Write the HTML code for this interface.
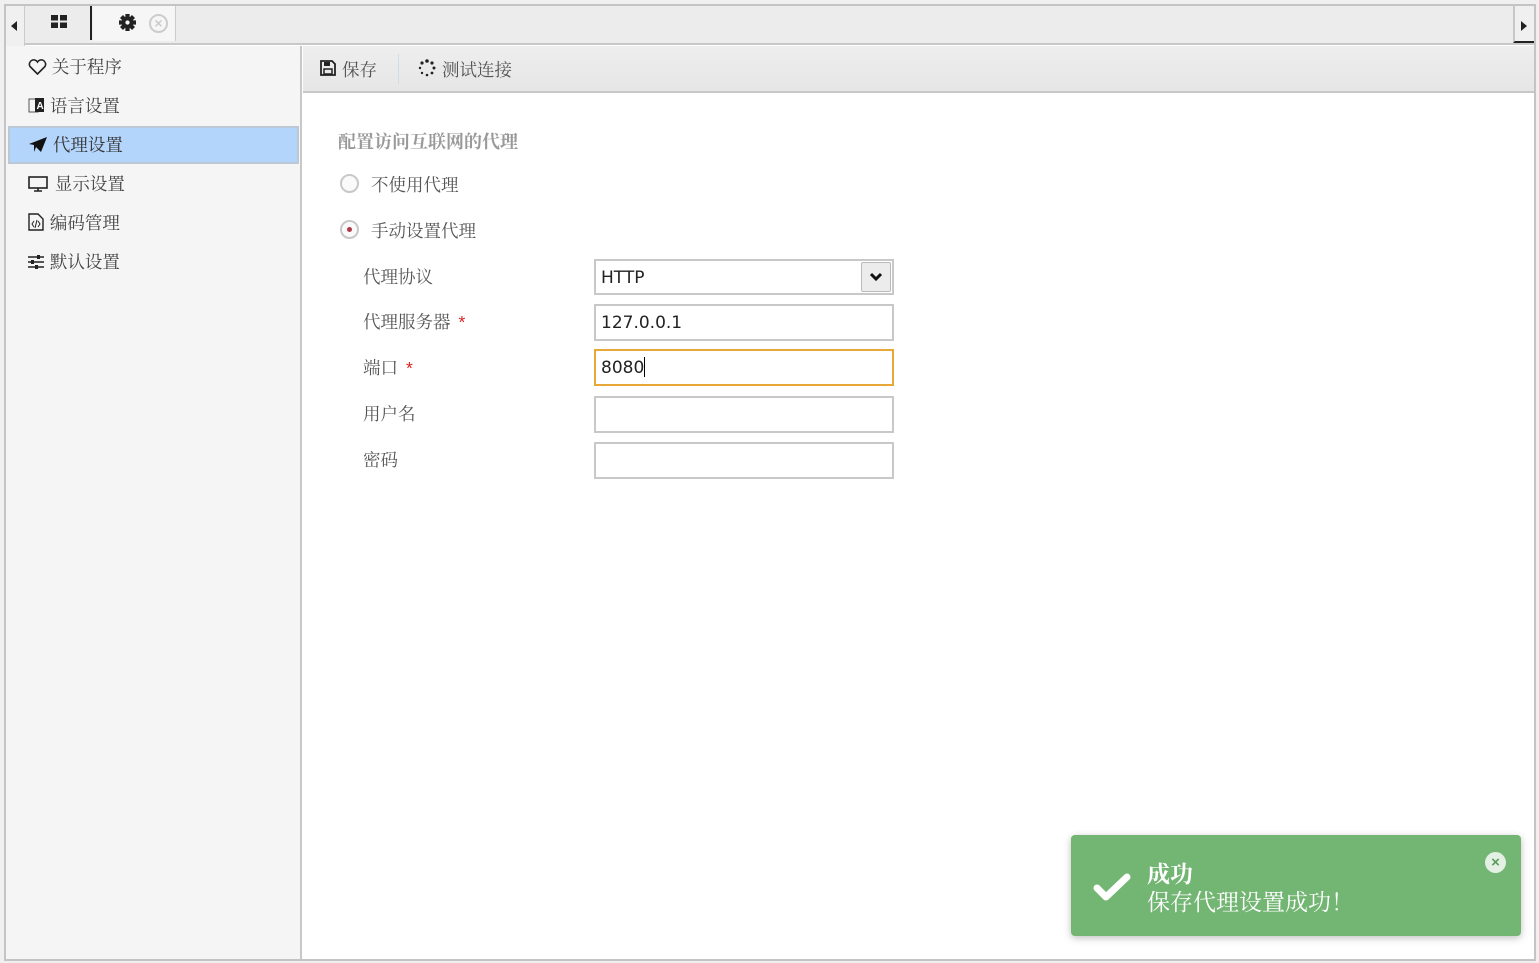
<!DOCTYPE html>
<html><head><meta charset="utf-8"><style>
*{box-sizing:border-box;margin:0;padding:0}
body{width:1539px;height:963px;background:#f0f0f0;position:relative;overflow:hidden;font-family:"Liberation Sans","Noto Serif CJK SC",serif;color:#333}
.abs{position:absolute}
.frame{left:4px;top:4px;width:1532px;height:957px;border:2px solid #c4c4c4;background:#fff}
.tabbar{left:6px;top:6px;width:1528px;height:39px;background:#ececec;border-bottom:2px solid #c8c8c8}
.side{left:6px;top:46px;width:296px;height:913px;background:#f5f5f5;border-right:2px solid #c8c8c8}
.item{position:absolute;left:22px;font-size:17.5px;color:#444;height:20px;line-height:20px;white-space:nowrap}
.toolbar{left:303px;top:46px;width:1231px;height:47px;background:linear-gradient(#eee,#e6e6e6);border-bottom:2px solid #c8c8c8}
.lbl{position:absolute;left:363px;font-size:17.5px;color:#555}
.inp{position:absolute;left:594px;width:300px;height:37px;border:2px solid #c8c8c8;background:#fff;font-size:18px;padding-left:5px;line-height:35px;color:#222;font-family:"DejaVu Sans","Liberation Sans",sans-serif;font-size:17px}
.star{color:#e02020;margin-left:8px}
</style></head><body>
<div class="abs frame"></div>
<div class="abs tabbar"></div>
<div class="abs" style="left:6px;top:6px;width:19px;height:40px;background:#f0f0f0;border-right:1px solid #ccc"></div>
<div class="abs" style="left:11px;top:21px;width:0;height:0;border-top:5px solid transparent;border-bottom:5px solid transparent;border-right:6px solid #222"></div>
<div class="abs" style="left:26px;top:6px;width:66px;height:34px;background:#ececec;border-right:2px solid #222"></div>
<svg class="abs" style="left:51px;top:15px" width="17" height="14"><rect x="0" y="0" width="7" height="5.5" fill="#222"/><rect x="9" y="0" width="7" height="5.5" fill="#222"/><rect x="0" y="7.5" width="7" height="5.5" fill="#222"/><rect x="9" y="7.5" width="7" height="5.5" fill="#222"/></svg>
<div class="abs" style="left:93px;top:6px;width:83px;height:35px;background:#f6f6f6;border-right:1px solid #ccc"></div>
<svg class="abs" style="left:119px;top:14px" width="17" height="17" viewBox="0 0 16 16"><g fill="#222" transform="translate(8 8)"><rect x="-2" y="-8" width="4" height="16"/><rect x="-2" y="-8" width="4" height="16" transform="rotate(45)"/><rect x="-2" y="-8" width="4" height="16" transform="rotate(90)"/><rect x="-2" y="-8" width="4" height="16" transform="rotate(135)"/><circle r="5.5"/><circle r="2" fill="#f6f6f6"/></g></svg>
<div class="abs" style="left:149px;top:14px;width:19px;height:19px;border:2px solid #ccc;border-radius:50%;color:#ccc;font-size:14px;line-height:14px;text-align:center;font-weight:bold;font-family:'Liberation Sans',sans-serif">×</div>
<div class="abs" style="left:1513px;top:6px;width:21px;height:37px;background:#f0f0f0;border-left:2px solid #c8c8c8;border-bottom:2px solid #222"></div>
<div class="abs" style="left:1521px;top:21px;width:0;height:0;border-top:5px solid transparent;border-bottom:5px solid transparent;border-left:6px solid #222"></div>

<div class="abs side">
 <div class="item" style="top:11px"><svg width="19" height="16" style="vertical-align:-2px"><path d="M9.5 15 L2 7.5 A4 4 0 0 1 9.5 3 A4 4 0 0 1 17 7.5 Z" fill="none" stroke="#222" stroke-width="1.6"/></svg> 关于程序</div>
 <div class="item" style="top:50px"><svg width="17" height="18" style="vertical-align:-3px"><rect x="1" y="2" width="9" height="13" fill="none" stroke="#555"/><rect x="7" y="1" width="9" height="14" fill="#222"/><text x="8.5" y="12" font-size="10" fill="#fff" font-family="Liberation Sans" font-weight="bold">A</text></svg> 语言设置</div>
 <div style="position:absolute;left:2px;top:80px;width:291px;height:38px;background:#b3d4fb;border:2px solid #bcc8d6"></div>
 <div class="item" style="top:89px;color:#333"><svg width="20" height="17" style="vertical-align:-2px"><path d="M1 8 L19 1 L13 16 L8 11 L6 16 L6 9 Z" fill="#111"/></svg> 代理设置</div>
 <div class="item" style="top:128px"><svg width="22" height="16" style="vertical-align:-2px"><rect x="1" y="1" width="18" height="11" fill="none" stroke="#222" stroke-width="1.6"/><path d="M6 15h8M10 12v3" stroke="#222" stroke-width="1.6"/></svg> 显示设置</div>
 <div class="item" style="top:167px"><svg width="17" height="18" style="vertical-align:-2px"><path d="M1 1h9l5 5v11H1z" fill="none" stroke="#222" stroke-width="1.4"/><path d="M6 8l-2 3 2 3M10 8l2 3-2 3M9 7l-2 8" stroke="#222" fill="none"/></svg> 编码管理</div>
 <div class="item" style="top:206px"><svg width="17" height="14" style="vertical-align:-1px"><path d="M0 2h16M0 7h16M0 12h16" stroke="#222" stroke-width="1.6"/><rect x="9" y="0" width="3" height="4" fill="#222"/><rect x="3" y="5" width="3" height="4" fill="#222"/><rect x="7" y="10" width="3" height="4" fill="#222"/></svg> 默认设置</div>
</div>

<div class="abs toolbar"></div>
<svg class="abs" style="left:320px;top:60px" width="16" height="16"><path d="M1 1h11l3 3v11H1z" fill="none" stroke="#222" stroke-width="1.8"/><rect x="4" y="2" width="6" height="4" fill="#222"/><rect x="4" y="9" width="8" height="5" fill="none" stroke="#222" stroke-width="1.5"/></svg>
<div class="abs" style="left:342px;top:57px;font-size:17.5px;color:#555">保存</div>
<div class="abs" style="left:398px;top:54px;width:1px;height:30px;background:#cfdde6"></div>
<svg class="abs" style="left:418px;top:59px" width="18" height="18"><g fill="#222"><circle cx="9" cy="2" r="1.8"/><circle cx="14" cy="4" r="1.6"/><circle cx="16" cy="9" r="1.5"/><circle cx="14" cy="14" r="1.4"/><circle cx="9" cy="16" r="1.3"/><circle cx="4" cy="14" r="1.2"/><circle cx="2" cy="9" r="1.2"/><circle cx="4" cy="4" r="1.6"/></g></svg>
<div class="abs" style="left:442px;top:57px;font-size:17.5px;color:#555">测试连接</div>

<div class="abs" style="left:338px;top:128px;font-size:18px;color:#999;font-weight:bold">配置访问互联网的代理</div>
<div class="abs" style="left:340px;top:174px;width:19px;height:19px;border:2px solid #c8c8c8;border-radius:50%;background:#fafafa"></div>
<div class="abs" style="left:371px;top:172px;font-size:17.5px;color:#555">不使用代理</div>
<div class="abs" style="left:340px;top:220px;width:19px;height:19px;border:2px solid #c8c8c8;border-radius:50%;background:#fafafa"></div>
<div class="abs" style="left:347px;top:227px;width:5px;height:5px;border-radius:50%;background:#b03a4a"></div>
<div class="abs" style="left:371px;top:218px;font-size:17.5px;color:#555">手动设置代理</div>

<div class="lbl" style="top:264px">代理协议</div>
<div class="lbl" style="top:309px">代理服务器<span class="star">*</span></div>
<div class="lbl" style="top:355px">端口<span class="star">*</span></div>
<div class="lbl" style="top:401px">用户名</div>
<div class="lbl" style="top:447px">密码</div>

<div class="inp" style="top:259px;height:36px">HTTP</div>
<div class="abs" style="left:861px;top:262px;width:30px;height:30px;background:#ececec;border:1px solid #bbb;border-radius:2px"></div>
<svg class="abs" style="left:869px;top:272px" width="14" height="10"><path d="M2 2l5 5 5-5" stroke="#111" stroke-width="3" fill="none"/></svg>
<div class="inp" style="top:304px">127.0.0.1</div>
<div class="inp" style="top:349px;border-color:#e8a838">8080<span style="display:inline-block;width:1px;height:20px;background:#000;vertical-align:-4px"></span></div>
<div class="inp" style="top:396px"></div>
<div class="inp" style="top:442px"></div>

<div class="abs" style="left:1071px;top:835px;width:450px;height:101px;background:#73b573;border-radius:4px;box-shadow:0 2px 8px rgba(0,0,0,.25)"></div>
<svg class="abs" style="left:1093px;top:872px" width="38" height="30"><path d="M4 16l9 9L34 5" stroke="#fff" stroke-width="7" fill="none" stroke-linecap="round" stroke-linejoin="round"/></svg>
<div class="abs" style="left:1147px;top:856px;font-size:23px;color:#fff;font-weight:bold">成功</div>
<div class="abs" style="left:1147px;top:884px;font-size:23px;color:#fff">保存代理设置成功！</div>
<div class="abs" style="left:1485px;top:852px;width:21px;height:21px;border-radius:50%;background:#e3f0e3;color:#5a9a5a;font-size:15px;line-height:21px;text-align:center;font-weight:bold;font-family:'Liberation Sans',sans-serif">×</div>
</body></html>
